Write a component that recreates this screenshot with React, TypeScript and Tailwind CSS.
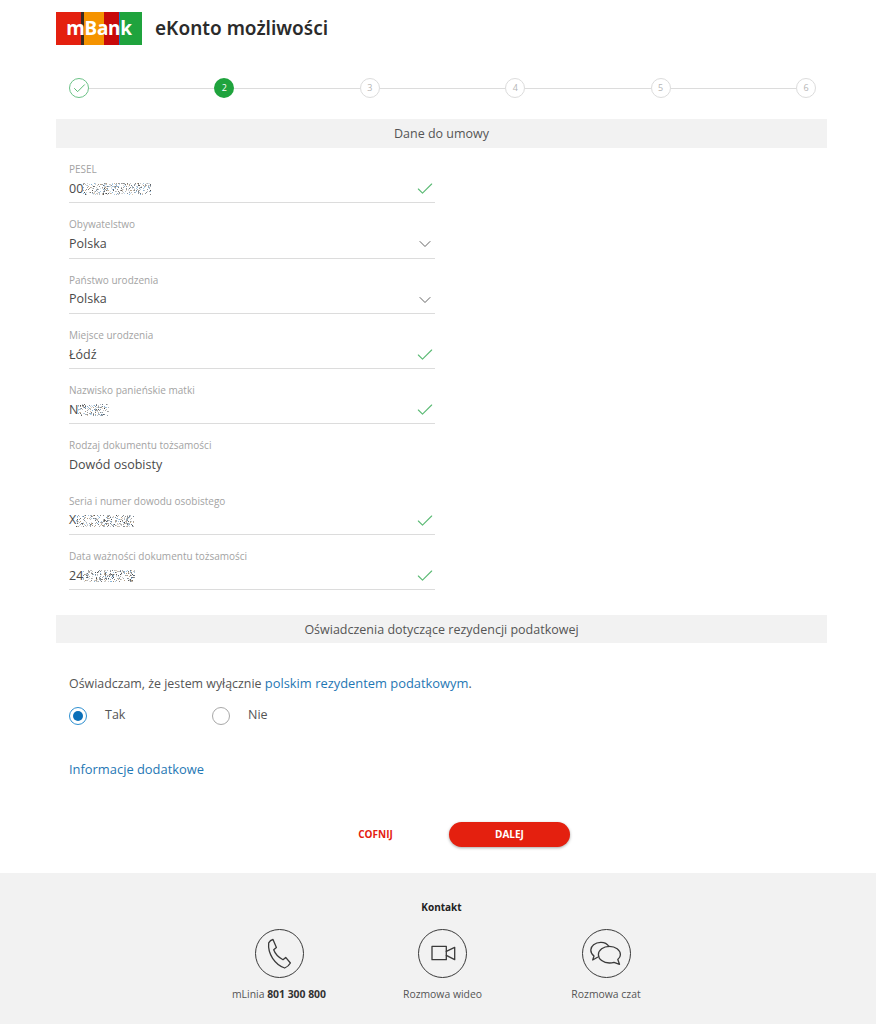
import React from 'react';
import { Check, ChevronDown } from 'lucide-react';

// pseudo-random speckles standing in for the masked personal data
const Masked: React.FC<{ width: number; seed: number }> = ({ width, seed }) => {
    const colors = ['#6f6f6f', '#9a9a9a', '#55697d', '#b89c7a', '#7fb0d8', '#444444', '#bdbdbd'];
    let s = seed;
    const next = () => {
        s = (s * 9301 + 49297) % 233280;
        return s / 233280;
    };
    const dots = Array.from({ length: width * 5 }, (_, i) => ({
        key: i,
        x: Math.floor(next() * width),
        y: 1 + Math.floor(next() * 12),
        fill: colors[Math.floor(next() * colors.length)],
        o: 0.4 + next() * 0.6,
    }));
    return (
        <svg width={width} height={14} className="block blur-[0.4px]">
            {dots.map((d) => (
                <rect key={d.key} x={d.x} y={d.y} width={1} height={1} fill={d.fill} opacity={d.o} />
            ))}
        </svg>
    );
};

type FieldProps = {
    label: string;
    value: string;
    mask?: number;
    seed?: number;
    icon?: 'check' | 'chevron';
    noLine?: boolean;
};

const Field: React.FC<FieldProps> = ({ label, value, mask, seed = 7, icon, noLine }) => (
    <div className={`h-[55.3px] w-[366px] pt-[14px] ${noLine ? '' : 'border-b border-[#dcdcdc]'}`}>
        <div className="text-[10px] leading-[14px] text-[#a3a3a3]">{label}</div>
        <div className="mt-[3px] flex h-[20px] items-center justify-between text-[12.5px] text-[#4a4a4a]">
            <div className="flex items-center">
                <span>{value}</span>
                {mask ? <Masked width={mask} seed={seed} /> : null}
            </div>
            {icon === 'check' && <Check size={20} strokeWidth={1.3} className="text-[#5aba74]" />}
            {icon === 'chevron' && <ChevronDown size={20} strokeWidth={1.1} className="text-[#555]" />}
        </div>
    </div>
);

const SectionBar: React.FC<{ title: string; className?: string }> = ({ title, className = '' }) => (
    <div className={`flex items-center justify-center bg-[#f2f2f2] pt-[1px] text-[12.5px] text-[#555] ${className}`}>{title}</div>
);

const Step: React.FC<{ n: number; current?: boolean; done?: boolean }> = ({ n, current, done }) => {
    if (done) {
        return (
            <div className="flex h-5 w-5 shrink-0 items-center justify-center rounded-full border border-[#6cc287] text-[#4fb56a]">
                <Check size={15} strokeWidth={1.5} />
            </div>
        );
    }
    if (current) {
        return (
            <div className="flex h-5 w-5 shrink-0 items-center justify-center rounded-full bg-[#1fa33d] text-[9px] text-white">
                {n}
            </div>
        );
    }
    return (
        <div className="flex h-5 w-5 shrink-0 items-center justify-center rounded-full border border-[#dcdcdc] text-[9px] text-[#b5b5b5]">
            {n}
        </div>
    );
};

const Logo: React.FC = () => (
    <div className="relative flex h-[33px] w-[86px]">
        <div className="w-[25px] bg-[#e4200f]" />
        <div className="w-[3px] bg-[#3a2a20]" />
        <div className="w-[20px] bg-[#f59300]" />
        <div className="w-[15px] bg-[#c80a0a]" />
        <div className="w-[1px] bg-[#1479c4]" />
        <div className="flex-1 bg-[#1fa33d]" />
        <div className="absolute inset-0 flex items-center justify-center pb-[1px] font-['Noto_Sans',sans-serif] text-[19px] font-bold tracking-[-0.2px] text-white">
            mBank
        </div>
    </div>
);

const IconCircle: React.FC<{ children: React.ReactNode }> = ({ children }) => (
    <div className="flex h-[49px] w-[49px] items-center justify-center rounded-full border-[1.5px] border-[#3a3a3a]">
        <svg width="34" height="34" viewBox="0 0 34 34" fill="none" stroke="#3a3a3a" strokeWidth="1.3" strokeLinejoin="round" strokeLinecap="round">
            {children}
        </svg>
    </div>
);

const Radio: React.FC<{ checked?: boolean; label: string; className?: string }> = ({ checked, label, className = '' }) => (
    <div className={`flex items-center ${className}`}>
        <div
            className={`flex h-[18px] w-[18px] items-center justify-center rounded-full border ${
                checked ? 'border-[#2e8fd0]' : 'border-[#a8a8a8]'
            }`}
        >
            {checked && <div className="h-[10px] w-[10px] rounded-full bg-[#0a6fb8]" />}
        </div>
        <span className="ml-[18px] text-[12.5px] text-[#555]">{label}</span>
    </div>
);

export default function App() {
    return (
        <div className="h-[1024px] w-[876px] overflow-hidden bg-white font-['Open_Sans',sans-serif]">
            <div className="ml-[56px] w-[771px]">
                <div className="mt-[12px] flex h-[33px] items-center">
                    <Logo />
                    <span className="ml-[13px] font-['Noto_Sans',sans-serif] text-[19px] font-semibold text-[#2b2b2b]">
                        eKonto możliwości
                    </span>
                </div>

                <div className="ml-[13px] mt-[33px] flex h-5 w-[747px] items-center">
                    <Step n={1} done />
                    <div className="h-px flex-1 bg-[#dcdcdc]" />
                    <Step n={2} current />
                    <div className="h-px flex-1 bg-[#dcdcdc]" />
                    <Step n={3} />
                    <div className="h-px flex-1 bg-[#dcdcdc]" />
                    <Step n={4} />
                    <div className="h-px flex-1 bg-[#dcdcdc]" />
                    <Step n={5} />
                    <div className="h-px flex-1 bg-[#dcdcdc]" />
                    <Step n={6} />
                </div>

                <SectionBar title="Dane do umowy" className="mt-[21px] h-[29px]" />

                <div className="pl-[13px]">
                    <Field label="PESEL" value="00" mask={68} seed={11} icon="check" />
                    <Field label="Obywatelstwo" value="Polska" icon="chevron" />
                    <Field label="Państwo urodzenia" value="Polska" icon="chevron" />
                    <Field label="Miejsce urodzenia" value="Łódź" icon="check" />
                    <Field label="Nazwisko panieńskie matki" value="N" mask={31} seed={23} icon="check" />
                    <Field label="Rodzaj dokumentu tożsamości" value="Dowód osobisty" noLine />
                    <Field label="Seria i numer dowodu osobistego" value="X" mask={58} seed={37} icon="check" />
                    <Field label="Data ważności dokumentu tożsamości" value="24" mask={52} seed={51} icon="check" />
                </div>

                <SectionBar title="Oświadczenia dotyczące rezydencji podatkowej" className="mt-[25px] h-[28px]" />

                <div className="pl-[13px]">
                    <p className="mt-[31px] text-[12.4px] leading-[18px] text-[#555]">
                        Oświadczam, że jestem wyłącznie{' '}
                        <span className="text-[12.9px] text-[#1f77b4]">polskim rezydentem podatkowym</span>.
                    </p>
                    <div className="mt-[13px] flex items-center">
                        <Radio checked label="Tak" className="w-[143px]" />
                        <Radio label="Nie" />
                    </div>
                    <div className="mt-[35px] text-[12.9px] leading-[18px] text-[#1f77b4]">Informacje dodatkowe</div>
                </div>

                <div className="mt-[44px] flex items-center justify-center gap-[13px] pl-[2px]">
                    <div className="flex h-[25px] w-[121px] items-center justify-center text-[10px] font-bold text-[#e4200f]">COFNIJ</div>
                    <div className="flex h-[25px] w-[121px] items-center justify-center rounded-full bg-[#e4200f] text-[10px] font-bold text-white shadow-[0_1px_3px_rgba(0,0,0,0.35)]">
                        DALEJ
                    </div>
                </div>
            </div>

            <div className="mt-[26px] h-[151px] bg-[#f2f2f2] pt-[27px]">
                <div className="ml-[7px] text-center text-[10px] font-bold leading-[14px] text-[#222]">Kontakt</div>
                <div className="ml-[9px] mt-[15px] flex justify-center">
                    <div className="flex w-[163.5px] flex-col items-center">
                        <IconCircle>
                            <path d="M6.700 5.800C7.800 4 9.200 3 11 2.500L14.400 10.400 11.700 12.700C13 16.500 17 20.500 21 22.700L23.700 20.400 28.400 26C27 28.500 25 30 22.700 31 13 27.500 5.500 17 6.700 5.800Z" />
                        </IconCircle>
                        <div className="mt-[9px] text-[10.4px] leading-[14px] text-[#555]">
                            mLinia <span className="font-bold text-[#333]">801 300 800</span>
                        </div>
                    </div>
                    <div className="flex w-[163.5px] flex-col items-center">
                        <IconCircle>
                            <rect x="6" y="9.400" width="14.300" height="13.300" />
                            <path d="M20.300 14.400 28.700 10.400V22.700L20.300 18.400" />
                        </IconCircle>
                        <div className="mt-[9px] text-[10.4px] leading-[14px] text-[#555]">Rozmowa wideo</div>
                    </div>
                    <div className="flex w-[163.5px] flex-col items-center">
                        <IconCircle>
                            <path d="M20 9.500C18 6.500 15 5.300 11.700 5.400 6 5.500 1.800 9 1.800 13 1.800 15.500 3 17.500 5 19L3.700 23 8.500 20.300" />
                            <path d="M20.400 9.400C14.400 9.400 9.400 13 9.400 17.700 9.400 22.300 14.400 26 20.400 26 22 26 23.500 25.800 25 25.300L30.500 27.300 28.800 22.500C30.500 21 31.400 19.400 31.400 17.700 31.400 13 26.400 9.400 20.400 9.400Z" />
                        </IconCircle>
                        <div className="mt-[9px] text-[10.4px] leading-[14px] text-[#555]">Rozmowa czat</div>
                    </div>
                </div>
            </div>
        </div>
    );
}
